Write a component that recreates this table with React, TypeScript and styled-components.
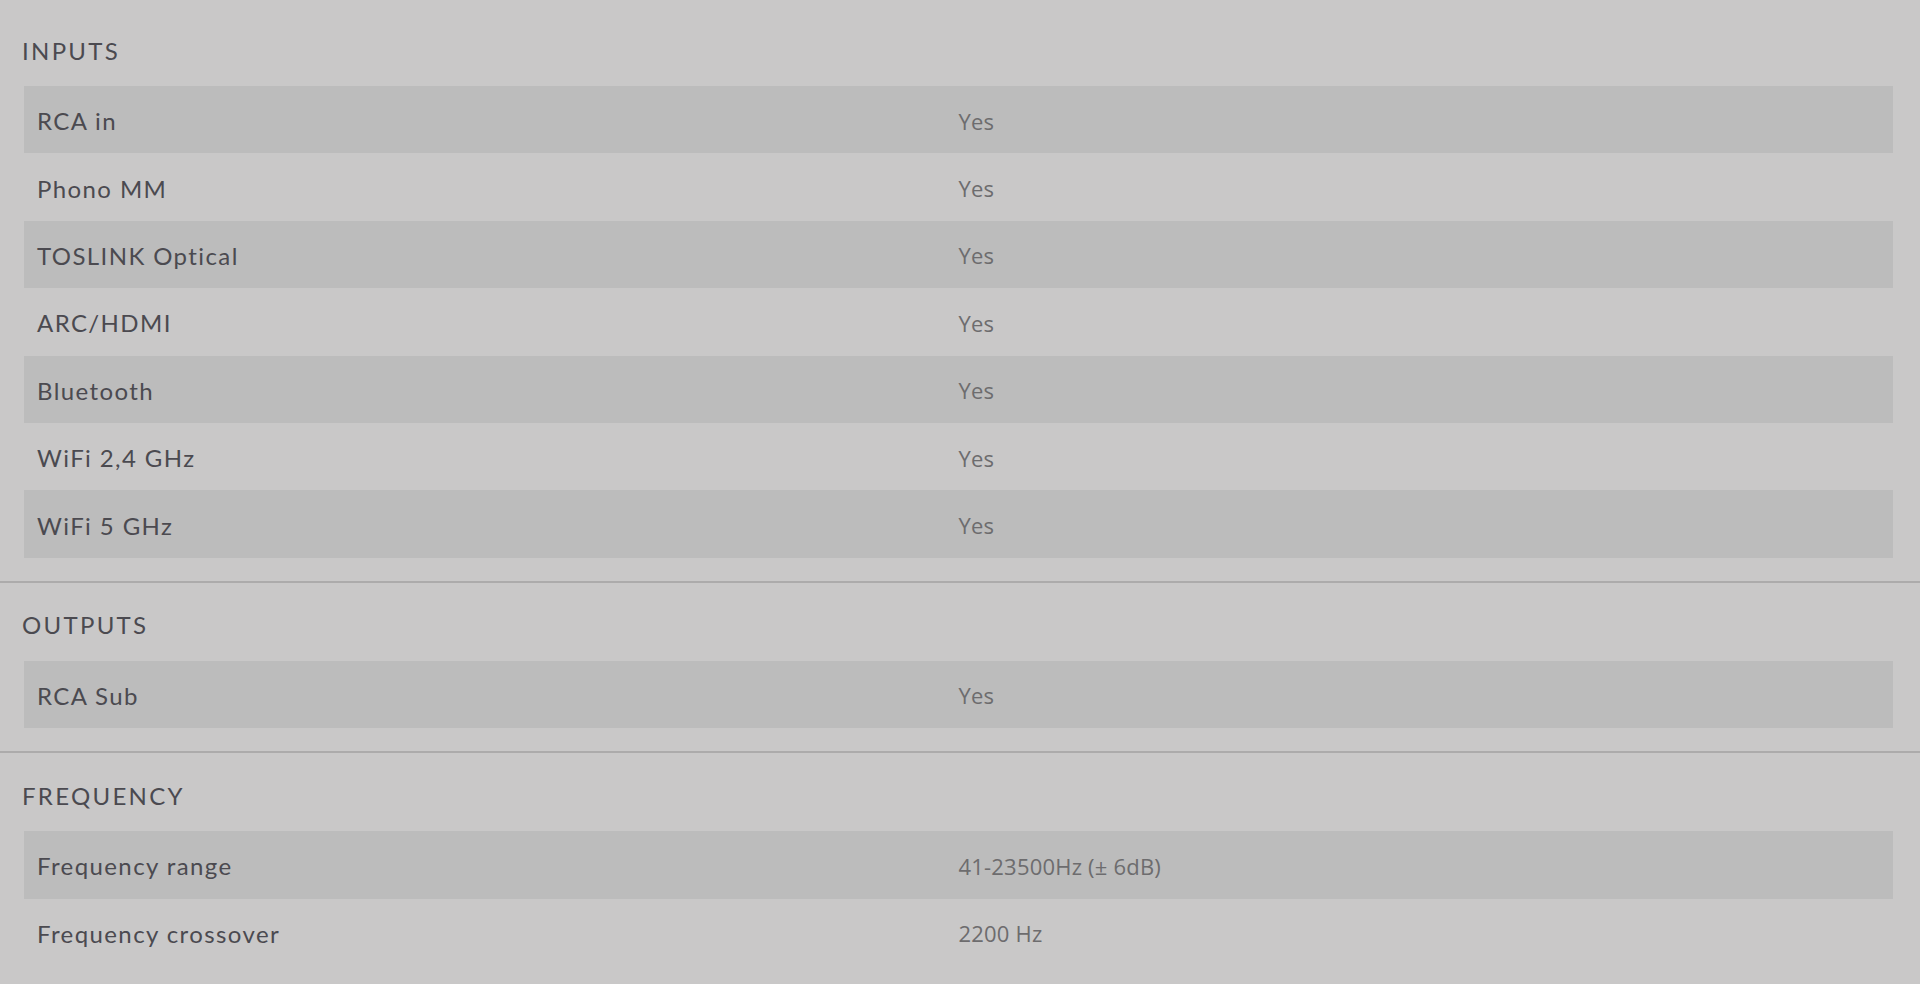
import React from 'react';
import styled, { createGlobalStyle } from 'styled-components';

const GlobalStyle = createGlobalStyle`
  html, body {
    margin: 0;
    padding: 0;
    background: #c9c8c8;
  }
  body {
    font-family: Lato, "Noto Sans", sans-serif;
  }
`;

type Spec = { label: string; value: string };

const sections: { title: string; rows: Spec[] }[] = [
  {
    title: 'Inputs',
    rows: [
      { label: 'RCA in', value: 'Yes' },
      { label: 'Phono MM', value: 'Yes' },
      { label: 'TOSLINK Optical', value: 'Yes' },
      { label: 'ARC/HDMI', value: 'Yes' },
      { label: 'Bluetooth', value: 'Yes' },
      { label: 'WiFi 2,4 GHz', value: 'Yes' },
      { label: 'WiFi 5 GHz', value: 'Yes' },
    ],
  },
  {
    title: 'Outputs',
    rows: [{ label: 'RCA Sub', value: 'Yes' }],
  },
  {
    title: 'Frequency',
    rows: [
      { label: 'Frequency range', value: '41-23500Hz (± 6dB)' },
      { label: 'Frequency crossover', value: '2200 Hz' },
    ],
  },
];

const Page = styled.div`
  display: flex;
  flex-direction: column;
  min-height: 984px;
`;

const Section = styled.section<{ $first?: boolean }>`
  padding: ${(p) => (p.$first ? '34px' : '26px')} 27px 23px 24px;
  border-top: ${(p) => (p.$first ? 'none' : '2px solid #acabab')};
`;

const Heading = styled.h2`
  margin: 0 0 20px -2px;
  height: 32px;
  display: flex;
  align-items: center;
  font-family: Lato, "Noto Sans", sans-serif;
  font-size: 24px;
  font-weight: 400;
  letter-spacing: 2.3px;
  text-transform: uppercase;
  color: #4b4a50;
`;

const Table = styled.div`
  display: flex;
  flex-direction: column;
`;

const Row = styled.div<{ $shaded: boolean }>`
  display: grid;
  grid-template-columns: 1fr 1fr;
  align-items: center;
  height: 67.4px;
  padding-top: 2px;
  box-sizing: border-box;
  background: ${(p) => (p.$shaded ? '#bcbcbc' : 'transparent')};
`;

const Label = styled.div`
  padding-left: 13px;
  font-family: Lato, "Noto Sans", sans-serif;
  font-size: 24px;
  letter-spacing: 1.4px;
  color: #4b4a50;
`;

const Value = styled.div`
  padding-left: 0;
  font-family: "Open Sans", "Noto Sans", sans-serif;
  font-size: 22px;
  letter-spacing: 0.2px;
  color: #6d6c6e;
`;

export default function App() {
  return (
    <>
      <GlobalStyle />
      <Page>
        {sections.map((s, i) => (
          <Section key={s.title} $first={i === 0}>
            <Heading>{s.title}</Heading>
            <Table>
              {s.rows.map((r, j) => (
                <Row key={r.label} $shaded={j % 2 === 0}>
                  <Label>{r.label}</Label>
                  <Value>{r.value}</Value>
                </Row>
              ))}
            </Table>
          </Section>
        ))}
      </Page>
    </>
  );
}
